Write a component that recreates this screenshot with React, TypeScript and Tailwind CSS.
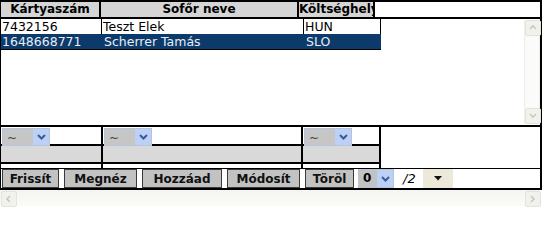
import React from "react";

const Chevron = ({ color }: { color: string }) => (
  <svg width="9" height="6" viewBox="0 0 9 6">
    <path d="M1 1 L4.5 4.5 L8 1" stroke={color} strokeWidth="2" fill="none" />
  </svg>
);

function FilterSelect() {
  return (
    <div className="flex h-[18px] w-[48px] border border-[#b7c3d8]">
      <div className="flex-1 bg-[#c6c6c6] pl-[4px] text-[12px] leading-[18px] text-[#444]">~</div>
      <div className="flex w-[16px] items-center justify-center bg-[#bdd0f6]">
        <Chevron color="#3a5a9a" />
      </div>
    </div>
  );
}

function Btn({ label, w }: { label: string; w: string }) {
  return (
    <div
      className={`${w} flex h-[19px] items-center justify-center border border-[#3a3a3a] bg-[#c2c2c2] text-[12px] font-bold text-[#111]`}
    >
      {label}
    </div>
  );
}

function ScrollArrow({ dir }: { dir: "up" | "down" | "left" | "right" }) {
  const d =
    dir === "up"
      ? "M2 6 L5 3 L8 6"
      : dir === "down"
      ? "M2 3 L5 6 L8 3"
      : dir === "left"
      ? "M6 2 L3 5 L6 8"
      : "M3 2 L6 5 L3 8";
  return (
    <div className="flex h-[16px] w-[16px] items-center justify-center rounded-[2px] border border-[#e4e4dc] bg-[#f2f2ec]">
      <svg width="10" height="10" viewBox="0 0 10 10">
        <path d={d} stroke="#c9c9c2" strokeWidth="1.6" fill="none" />
      </svg>
    </div>
  );
}

export default function App() {
  return (
    <div
      className="h-[208px] w-[545px] overflow-hidden bg-white text-black"
      style={{ fontFamily: '"DejaVu Sans", Verdana, sans-serif' }}
    >
      <div className="w-[542px] border-t-2 border-r-2 border-b-2 border-l border-black">
        {/* header */}
        <div className="flex h-[17px] border-b-2 border-black text-[12px] font-bold leading-[15px]">
          <div className="w-[100px] border-r-2 border-black bg-[#d5d5d5] text-center">Kártyaszám</div>
          <div className="w-[198px] border-r-2 border-black bg-[#d5d5d5] text-center">Sofőr neve</div>
          <div className="w-[76px] overflow-hidden whitespace-nowrap border-r-2 border-black bg-[#d5d5d5]">
            Költséghely
          </div>
          <div className="flex-1 bg-white" />
        </div>
        {/* body */}
        <div className="flex h-[106px]">
          <div className="w-[380px] self-start border-b border-black text-[12.5px] leading-[15px]">
            <div className="flex h-[15px] bg-white">
              <div className="w-[101px] border-r border-black pl-[1px]">7432156</div>
              <div className="w-[202px] border-r border-black pl-[1px]">Teszt Elek</div>
              <div className="w-[77px] border-r border-black pl-[1px]">HUN</div>
            </div>
            <div className="flex h-[15px] bg-[#0c3a6a] text-[#e6edf7]">
              <div className="w-[101px] pl-[1px]">1648668771</div>
              <div className="w-[202px] pl-[2px]">Scherrer Tamás</div>
              <div className="w-[77px] pl-[2px]">SLO</div>
            </div>
          </div>
          <div className="flex-1" />
          <div className="mb-[1px] mt-[1px] flex w-[16px] flex-col justify-between border-x border-[#eeeeea] bg-[#fbfbf9]">
            <ScrollArrow dir="up" />
            <ScrollArrow dir="down" />
          </div>
        </div>
        {/* filters */}
        <div className="flex h-[43px] border-t-2 border-black">
          {["w-[100px]", "w-[198px]", "w-[76px]"].map((w, i) => (
            <div key={i} className={`${w} box-content flex h-[41px] flex-col border-r-2 border-black`}>
              <div className="h-[19px] border-b-2 border-black pl-[1px] pt-[1px]">
                <FilterSelect />
              </div>
              <div className="h-[18px] border-b-2 border-black bg-[#d9d9d9]" />
            </div>
          ))}
          <div className="flex-1" />
        </div>
        {/* buttons */}
        <div className="flex h-[20px] items-start gap-[5px] border-t border-black pl-[1px]">
          <Btn label="Frissít" w="w-[57px]" />
          <Btn label="Megnéz" w="w-[73px]" />
          <Btn label="Hozzáad" w="w-[80px]" />
          <Btn label="Módosít" w="w-[73px]" />
          <Btn label="Töröl" w="w-[49px]" />
          <div className="ml-[-1px] flex h-[19px] w-[36px] border border-[#b7c3d8]">
            <div className="flex-1 bg-[#c2c2c2] pl-[4px] text-[12px] font-bold leading-[17px]">0</div>
            <div className="flex w-[16px] items-center justify-center bg-[#bdd0f6]">
              <Chevron color="#3a5a9a" />
            </div>
          </div>
          <div className="w-[19px] pl-[4px] text-[13px] italic leading-[19px]">/2</div>
          <div className="flex h-[19px] w-[30px] items-center justify-center bg-[#ece9d8]">
            <svg width="8" height="5" viewBox="0 0 8 5">
              <path d="M0 0 L8 0 L4 4.5 Z" fill="#111" />
            </svg>
          </div>
        </div>
      </div>
      {/* horizontal scrollbar */}
      <div className="flex h-[16px] w-[541px] items-center justify-between bg-gradient-to-b from-[#f4f4f0] to-[#fbfbf8] pl-[1px] pt-[1px]">
        <ScrollArrow dir="left" />
        <ScrollArrow dir="right" />
      </div>
    </div>
  );
}
